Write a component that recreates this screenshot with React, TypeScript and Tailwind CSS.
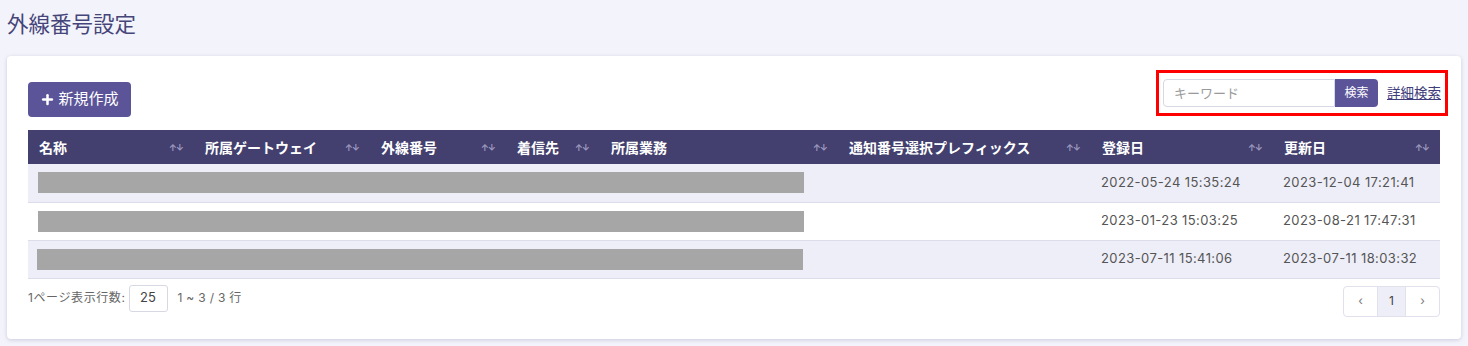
import { Plus } from "lucide-react";

const columns = [
  { name: "名称", width: "w-[166px]" },
  { name: "所属ゲートウェイ", width: "w-[176px]" },
  { name: "外線番号", width: "w-[136px]" },
  { name: "着信先", width: "w-[94px]" },
  { name: "所属業務", width: "w-[238px]" },
  { name: "通知番号選択プレフィックス", width: "w-[253px]" },
  { name: "登録日", width: "w-[182px]" },
  { name: "更新日", width: "w-[167px]" }
];

const rows = [
  { created: "2022-05-24 15:35:24", updated: "2023-12-04 17:21:41", bar: "ml-[10px]" },
  { created: "2023-01-23 15:03:25", updated: "2023-08-21 17:47:31", bar: "ml-[10px]" },
  { created: "2023-07-11 15:41:06", updated: "2023-07-11 18:03:32", bar: "ml-[9px]" }
];

const SortIcon = () => (
  <span className="text-[9px] leading-none tracking-[-1px] text-[#9a98bd]">↑↓</span>
);

export default function App() {
  return (
    <div className="min-h-[346px] bg-[#f3f4fb] px-[7px] pt-[10px] pb-[7px] font-['Inter','Noto_Sans_CJK_JP',sans-serif]">
      <h1 className="text-[21.5px] leading-[28px] text-[#46457a]">外線番号設定</h1>

      <div className="mt-[18px] h-[283px] rounded-[4px] bg-white px-[21px] pt-[14px] shadow-[0_1px_4px_rgba(60,60,120,0.22)]">
        <div className="flex items-start justify-between">
          <button className="mt-[12px] flex h-[35px] w-[103px] items-center justify-center gap-[3px] rounded-[4px] bg-[#5b5499] text-[15px] text-white">
            <Plus size={15} strokeWidth={4} />
            <span>新規作成</span>
          </button>
          <div className="-mr-[8px] flex h-[46px] w-[292px] items-center border-[3px] border-[#ff0000] pl-[4px]">
            <input
              placeholder="キーワード"
              className="h-[28px] w-[172px] rounded-l-[4px] border border-[#d6d8e4] px-[10px] text-[13px] text-[#333] placeholder:text-[#9a9a9a] outline-none"
            />
            <button className="h-[28px] w-[43px] rounded-r-[4px] bg-[#5b5499] text-[12px] text-white">検索</button>
            <a href="#" className="ml-[9px] text-[13.5px] text-[#3e3c7a] underline">詳細検索</a>
          </div>
        </div>

        <table className="mt-[13px] w-[1412px] table-fixed border-collapse text-[13px]">
          <thead>
            <tr className="h-[34px] bg-[#433f6e] text-white">
              {columns.map((col) => (
                <th key={col.name} className={`${col.width} px-[11px] text-left text-[14px] font-bold`}>
                  <div className="flex items-center justify-between">
                    <span className="whitespace-nowrap">{col.name}</span>
                    <SortIcon />
                  </div>
                </th>
              ))}
            </tr>
          </thead>
          <tbody>
            {rows.map((row, i) => (
              <tr
                key={i}
                className={`h-[38px] border-b border-[#dcdcea] ${i % 2 === 0 ? "bg-[#eeeef8]" : "bg-white"}`}
              >
                <td colSpan={5} className="p-0">
                  <div className={`${row.bar} h-[21px] w-[766px] bg-[#a6a6a6]`} />
                </td>
                <td />
                <td className="px-[10px] text-[#555] tracking-[0.4px] whitespace-nowrap">{row.created}</td>
                <td className="px-[10px] text-[#555] tracking-[0.4px] whitespace-nowrap">{row.updated}</td>
              </tr>
            ))}
          </tbody>
        </table>

        <div className="mt-[6px] flex items-start justify-between">
          <div className="flex items-center text-[12px] text-[#666]">
            <span className="tracking-[0.6px]">1ページ表示行数:</span>
            <div className="ml-[3px] flex h-[27px] w-[39px] items-center justify-center rounded-[3px] border border-[#d6d8e4] text-[13px] text-[#444]">
              25
            </div>
            <span className="ml-[10px] tracking-[0.3px]">1 ~ 3 / 3 行</span>
          </div>
          <div className="mt-[1px] flex h-[31px] overflow-hidden rounded-[4px] border border-[#e0e1ec] text-[12px] text-[#777]">
            <div className="flex w-[33px] items-center justify-center">‹</div>
            <div className="flex w-[29px] items-center justify-center border-x border-[#e0e1ec] bg-[#eeeef8] text-[#444]">1</div>
            <div className="flex w-[33px] items-center justify-center">›</div>
          </div>
        </div>
      </div>
    </div>
  );
}
